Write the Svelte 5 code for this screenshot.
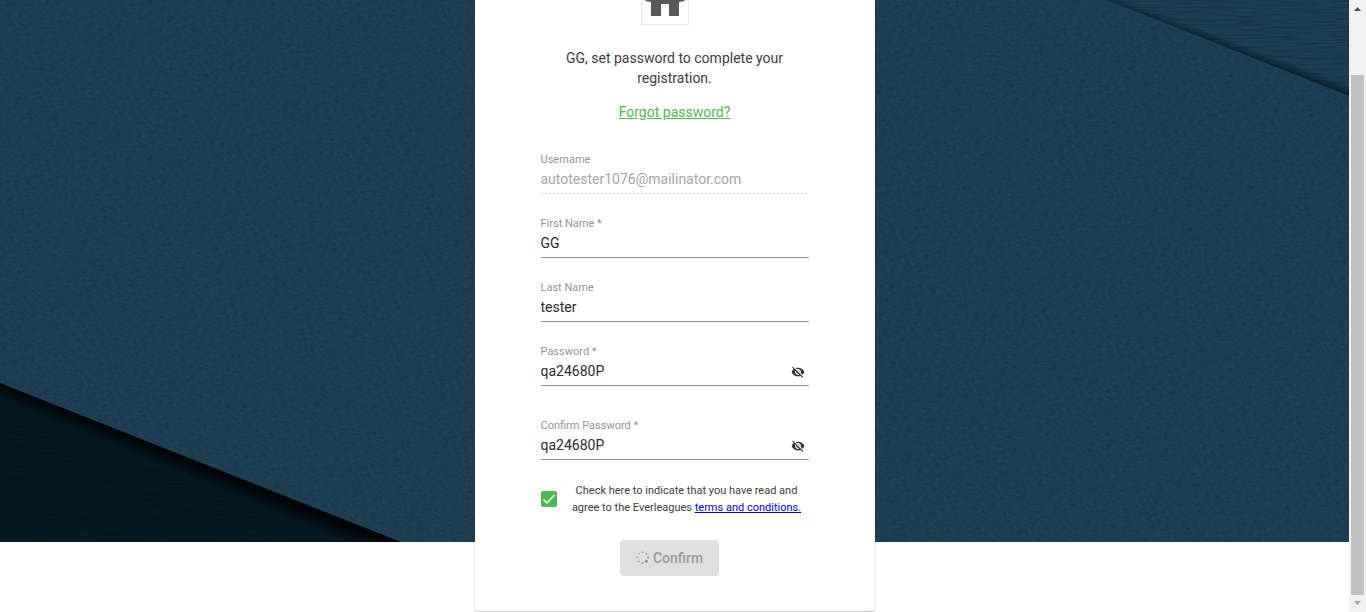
<script>
  let firstName = $state('GG');
  let lastName = $state('tester');
  let password = $state('qa24680P');
  let confirmation = $state('qa24680P');
  let accepted = $state(true);
  let showPassword = $state(true);
  let showConfirmation = $state(true);

  const dots = [
    [6.5, 1.2, 0.8], [10.4, 2.8, 0.9], [12, 6.5, 1.1], [10.4, 10.3, 1.5],
    [6.5, 12, 1], [2.8, 10.3, 0.9], [1.2, 6.5, 0.8], [2.8, 2.8, 0.8]
  ];
</script>

{#snippet hiddenEye()}
  <svg viewBox="0 0 24 24" width="14" height="14" aria-hidden="true">
    <path fill="#333" d="M12 7c2.76 0 5 2.24 5 5 0 .65-.13 1.26-.36 1.83l2.92 2.92c1.51-1.26 2.7-2.89 3.43-4.75-1.73-4.39-6-7.5-11-7.5-1.4 0-2.74.25-3.98.7l2.16 2.16C10.74 7.13 11.35 7 12 7zM2 4.27l2.28 2.28.46.46C3.08 8.3 1.78 10.02 1 12c1.73 4.39 6 7.5 11 7.5 1.55 0 3.03-.3 4.38-.84l.42.42L19.73 22 21 20.73 3.27 3 2 4.27zM7.53 9.8l1.55 1.55c-.05.21-.08.43-.08.65 0 1.66 1.34 3 3 3 .22 0 .44-.03.65-.08l1.55 1.55c-.67.33-1.41.53-2.2.53-2.76 0-5-2.24-5-5 0-.79.2-1.53.53-2.2zm4.31-.78l3.15 3.15.02-.16c0-1.66-1.34-3-3-3l-.17.01z" />
  </svg>
{/snippet}

<div class="page">
  <div class="stage">
    <svg class="backdrop" viewBox="0 0 1349 542" preserveAspectRatio="none" aria-hidden="true">
      <defs>
        <filter id="grain" x="0" y="0" width="100%" height="100%" color-interpolation-filters="sRGB">
          <feTurbulence type="fractalNoise" baseFrequency="0.2 0.7" numOctaves="2" seed="4" />
          <feColorMatrix values="0 0 0 0 0  0 0 0 0 0.06  0 0 0 0 0.12  1 0 0 0 -0.35" />
        </filter>
        <filter id="fibre" x="0" y="0" width="100%" height="100%" color-interpolation-filters="sRGB">
          <feTurbulence type="fractalNoise" baseFrequency="0.03 0.7" numOctaves="2" seed="9" />
          <feColorMatrix values="0 0 0 0 0  0 0 0 0 0.05  0 0 0 0 0.08  1.2 0 0 0 -0.45" />
        </filter>
        <linearGradient id="edgeTop" gradientUnits="userSpaceOnUse" x1="1220" y1="45" x2="1223" y2="37">
          <stop offset="0" stop-color="#06151e" stop-opacity=".65" />
          <stop offset="1" stop-color="#06151e" stop-opacity="0" />
        </linearGradient>
        <linearGradient id="edgeBottom" gradientUnits="userSpaceOnUse" x1="200" y1="462" x2="193" y2="479">
          <stop offset="0" stop-color="#000305" />
          <stop offset=".3" stop-color="#000305" stop-opacity=".8" />
          <stop offset="1" stop-color="#000305" stop-opacity="0" />
        </linearGradient>
        <clipPath id="topFold"><path d="M1107 0H1349V96Z" /></clipPath>
        <clipPath id="bottomFold"><path d="M0 383L401 542H0Z" /></clipPath>
      </defs>
      <rect width="1349" height="542" fill="#204157" />
      <g transform="rotate(22 674 271)">
        <rect x="-100" y="-300" width="1550" height="1150" filter="url(#grain)" opacity=".45" />
      </g>
      <g clip-path="url(#topFold)">
        <path d="M1107 0H1349V96Z" fill="#1f4054" />
        <rect x="1100" width="249" height="100" filter="url(#fibre)" opacity=".5" />
        <path d="M1107 0H1349V96Z" fill="url(#edgeTop)" />
      </g>
      <g clip-path="url(#bottomFold)">
        <path d="M0 383L401 542H0Z" fill="#051a24" />
        <rect y="380" width="401" height="162" filter="url(#fibre)" opacity=".4" />
        <path d="M0 383L401 542H0Z" fill="url(#edgeBottom)" />
      </g>
    </svg>

    <main class="card">
      <div class="avatar-window">
        <div class="avatar">
          <svg viewBox="0 0 46 46" width="46" height="46" aria-hidden="true">
            <path fill="#595959" d="M23 3L3 23L9 24V38H19V26H27V38H37V24L43 23Z" />
          </svg>
        </div>
      </div>

      <p class="intro">GG, set password to complete your registration.</p>
      <a class="forgot" href="#forgot">Forgot password?</a>

      <form onsubmit={(e) => e.preventDefault()}>
        <div class="field disabled">
          <label for="username">Username</label>
          <input id="username" type="text" value="autotester1076@mailinator.com" disabled />
        </div>
        <div class="field">
          <label for="first">First Name *</label>
          <input id="first" type="text" bind:value={firstName} />
        </div>
        <div class="field">
          <label for="last">Last Name</label>
          <input id="last" type="text" bind:value={lastName} />
        </div>
        <div class="field secret">
          <label for="password">Password *</label>
          <div class="control">
            <input id="password" type={showPassword ? 'text' : 'password'} bind:value={password} />
            <button class="eye" type="button" aria-label="Toggle password" onclick={() => (showPassword = !showPassword)}>
              {@render hiddenEye()}
            </button>
          </div>
        </div>
        <div class="field">
          <label for="confirm">Confirm Password *</label>
          <div class="control">
            <input id="confirm" type={showConfirmation ? 'text' : 'password'} bind:value={confirmation} />
            <button class="eye" type="button" aria-label="Toggle confirmation" onclick={() => (showConfirmation = !showConfirmation)}>
              {@render hiddenEye()}
            </button>
          </div>
        </div>

        <div class="terms">
          <input id="terms" type="checkbox" bind:checked={accepted} />
          <p><label for="terms">Check here to indicate that you have read and agree to the Everleagues</label> <a href="#terms">terms and conditions.</a></p>
        </div>

        <button class="submit" type="submit" disabled>
          <svg viewBox="0 0 14 14" width="14" height="14" aria-hidden="true">
            {#each dots as [cx, cy, r]}
              <circle {cx} {cy} {r} fill="#959595" />
            {/each}
          </svg>
          Confirm
        </button>
      </form>
    </main>
  </div>

  <div class="scrollbar" aria-hidden="true">
    <svg viewBox="0 0 17 17" width="17" height="17"><path d="M5 11L8.500 7L12 11Z" fill="#505050" /></svg>
    <div class="track"><div class="thumb"></div></div>
    <svg viewBox="0 0 17 17" width="17" height="17"><path d="M5 6L8.500 10L12 6Z" fill="#a3a3a3" /></svg>
  </div>
</div>

<style>
  :global(body) {
    margin: 0;
    background: #fff;
  }
  .page {
    display: flex;
    min-height: 100vh;
    font-family: Roboto, "Liberation Sans", sans-serif;
    font-size: 14px;
    color: #3c3c3c;
  }
  .stage {
    flex: 1;
    min-width: 0;
    display: grid;
    justify-items: center;
    align-items: start;
  }
  .backdrop {
    grid-area: 1 / 1;
    display: block;
    width: 100%;
    height: calc(100vh - 70px);
  }
  .card {
    grid-area: 1 / 1;
    z-index: 1;
    box-sizing: border-box;
    width: 100%;
    max-width: 400px;
    padding: 0 66px 35px;
    display: flex;
    flex-direction: column;
    align-items: center;
    background: #fff;
    border-radius: 0 0 4px 4px;
    box-shadow: 0 1px 2px rgba(0, 0, 0, 0.3);
  }
  .avatar-window {
    display: flex;
    align-items: flex-end;
    height: 25px;
    margin-right: 20px;
    overflow: hidden;
  }
  .avatar {
    border: 1px solid #e6e6e6;
  }
  .avatar svg {
    display: block;
  }
  .intro {
    margin: 23px 0 14px;
    padding: 0 16px;
    line-height: 20px;
    text-align: center;
  }
  .forgot {
    line-height: 20px;
    color: #4fb84f;
  }
  form {
    width: 100%;
    margin-top: 30px;
    display: flex;
    flex-direction: column;
  }
  .field {
    margin-bottom: 22px;
  }
  .secret {
    margin-bottom: 32px;
  }
  .field label {
    display: block;
    font-size: 11px;
    line-height: 16px;
    color: #949494;
  }
  .field input {
    display: block;
    box-sizing: border-box;
    width: 100%;
    height: 26px;
    padding: 0 0 3px;
    border: 0;
    border-bottom: 1px solid #949494;
    border-radius: 0;
    background: none;
    font: inherit;
    color: #2c2c2c;
    outline: none;
  }
  .field.disabled input {
    color: #a6a6a6;
    border-bottom: 0;
    padding-bottom: 4px;
    background: repeating-linear-gradient(to right, #a6a6a6 0 1px, transparent 1px 4px) bottom / 100% 1px no-repeat;
  }
  .control {
    display: flex;
    align-items: center;
    border-bottom: 1px solid #949494;
  }
  .field .control input {
    height: 25px;
    padding-bottom: 3px;
    border: 0;
  }
  .eye {
    display: flex;
    padding: 0 4px 1px;
    border: 0;
    background: none;
    cursor: pointer;
  }
  .terms {
    display: flex;
    align-items: center;
    gap: 8px;
  }
  .terms input {
    appearance: none;
    flex: none;
    width: 16px;
    height: 16px;
    margin: 0;
    border: 2px solid #757575;
    border-radius: 2px;
  }
  .terms input:checked {
    border: 0;
    background: #4fb84f url("data:image/svg+xml,%3Csvg xmlns='http://www.w3.org/2000/svg' viewBox='0 0 16 16'%3E%3Cpath d='M2.500 8.500L6 12L13.500 4' fill='none' stroke='white' stroke-width='1.500'/%3E%3C/svg%3E") center / 16px 16px;
  }
  .terms p {
    flex: 1;
    margin: 0;
    font-size: 11px;
    line-height: 17px;
    text-align: center;
  }
  .terms a {
    color: #0000ee;
  }
  .submit {
    align-self: center;
    display: flex;
    align-items: center;
    gap: 3px;
    margin: 24px 10px 0 0;
    padding: 0 16px;
    height: 36px;
    border: 0;
    border-radius: 4px;
    background: #e0e0e0;
    font: 500 14px Roboto, "Liberation Sans", sans-serif;
    color: #999;
  }
  .scrollbar {
    flex: none;
    width: 17px;
    display: flex;
    flex-direction: column;
    background: #f1f1f1;
  }
  .scrollbar svg {
    display: block;
  }
  .track {
    flex: 1;
    display: flex;
    align-items: flex-end;
    justify-content: center;
  }
  .thumb {
    width: 13px;
    height: 90%;
    background: #c1c1c1;
  }
</style>
